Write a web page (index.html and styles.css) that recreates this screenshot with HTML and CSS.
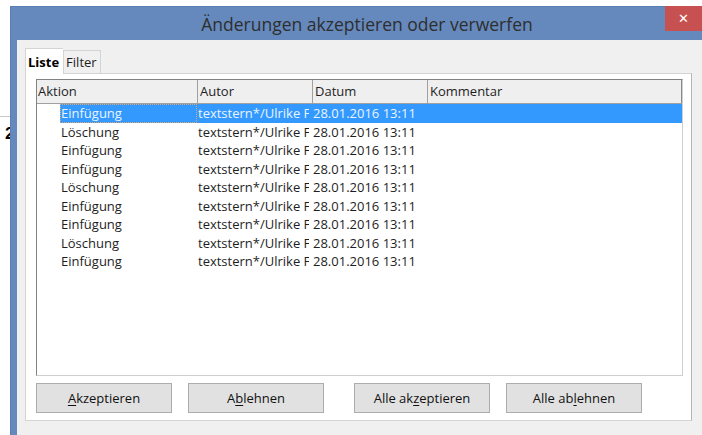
FILE: index.html
```html
<!DOCTYPE html>
<html lang="de">
<head>
<meta charset="utf-8">
<title>Änderungen akzeptieren oder verwerfen</title>
<link rel="stylesheet" href="styles.css">
</head>
<body>
  <div class="desk">
    <div class="doc-rule"></div>
    <span class="doc-num">2</span>
  </div>

  <div class="window">
    <div class="titlebar">
      <span class="title">Änderungen akzeptieren oder verwerfen</span>
      <span class="close">✕</span>
    </div>

    <div class="client">
      <div class="tabs">
        <span class="tab tab-active">Liste</span>
        <span class="tab">Filter</span>
      </div>

      <div class="page">
        <div class="list">
          <div class="head">
            <span class="hcell hc1">Aktion</span>
            <span class="hcell hc2">Autor</span>
            <span class="hcell hc3">Datum</span>
            <span class="hcell hc4">Kommentar</span>
          </div>
          <div class="rows">
            <div class="row row-sel"><span class="cell c-act focus">Einfügung</span><span class="cell c-aut"><span class="clip">textstern*/Ulrike Fuchs</span></span><span class="cell c-date">28.01.2016 13:11</span><span class="cell c-com"></span></div>
            <div class="row"><span class="cell c-act">Löschung</span><span class="cell c-aut"><span class="clip">textstern*/Ulrike Fuchs</span></span><span class="cell c-date">28.01.2016 13:11</span><span class="cell c-com"></span></div>
            <div class="row"><span class="cell c-act">Einfügung</span><span class="cell c-aut"><span class="clip">textstern*/Ulrike Fuchs</span></span><span class="cell c-date">28.01.2016 13:11</span><span class="cell c-com"></span></div>
            <div class="row"><span class="cell c-act">Einfügung</span><span class="cell c-aut"><span class="clip">textstern*/Ulrike Fuchs</span></span><span class="cell c-date">28.01.2016 13:11</span><span class="cell c-com"></span></div>
            <div class="row"><span class="cell c-act">Löschung</span><span class="cell c-aut"><span class="clip">textstern*/Ulrike Fuchs</span></span><span class="cell c-date">28.01.2016 13:11</span><span class="cell c-com"></span></div>
            <div class="row"><span class="cell c-act">Einfügung</span><span class="cell c-aut"><span class="clip">textstern*/Ulrike Fuchs</span></span><span class="cell c-date">28.01.2016 13:11</span><span class="cell c-com"></span></div>
            <div class="row"><span class="cell c-act">Einfügung</span><span class="cell c-aut"><span class="clip">textstern*/Ulrike Fuchs</span></span><span class="cell c-date">28.01.2016 13:11</span><span class="cell c-com"></span></div>
            <div class="row"><span class="cell c-act">Löschung</span><span class="cell c-aut"><span class="clip">textstern*/Ulrike Fuchs</span></span><span class="cell c-date">28.01.2016 13:11</span><span class="cell c-com"></span></div>
            <div class="row"><span class="cell c-act">Einfügung</span><span class="cell c-aut"><span class="clip">textstern*/Ulrike Fuchs</span></span><span class="cell c-date">28.01.2016 13:11</span><span class="cell c-com"></span></div>
          </div>
        </div>

        <div class="buttons">
          <button class="btn"><u>A</u>kzeptieren</button>
          <button class="btn">A<u>b</u>lehnen</button>
          <button class="btn btn-gap">Alle ak<u>z</u>eptieren</button>
          <button class="btn">Alle ab<u>l</u>ehnen</button>
        </div>
      </div>
    </div>
  </div>
</body>
</html>
```

FILE: styles.css
```css
* { box-sizing: border-box; }

html, body {
  margin: 0;
  padding: 0;
}

body {
  width: 702px;
  height: 435px;
  overflow: hidden;
  position: relative;
  background: #ffffff;
  font-family: "Open Sans", "Noto Sans", sans-serif;
  font-size: 13px;
  color: #1e1e1e;
}

/* document visible behind the dialog */
.desk {
  padding-top: 116px;
  width: 12px;
}
.doc-rule {
  height: 1px;
  background: #c8c8c8;
}
.doc-num {
  display: block;
  margin: 7px 0 0 5px;
  font-family: "Liberation Sans", sans-serif;
  font-weight: bold;
  font-size: 17px;
  line-height: 20px;
  color: #000;
}

/* dialog window */
.window {
  position: absolute;
  left: 10px;
  top: 6px;
  width: 714px;
  height: 436px;
  background: #6589bd;
  border: 1px solid #5a7fb5;
  display: flex;
  flex-direction: column;
}

.titlebar {
  position: relative;
  height: 33px;
  flex: none;
  display: flex;
  align-items: center;
  justify-content: center;
}
.title {
  font-family: "Open Sans", "Noto Sans", sans-serif;
  font-size: 17.5px;
  color: #2e2e2e;
  margin-top: 1px;
}
.close {
  position: absolute;
  left: 654px;
  top: -1px;
  width: 37px;
  height: 25px;
  background: #c75050;
  color: #fff;
  font-family: "DejaVu Sans", sans-serif;
  font-size: 13px;
  font-weight: bold;
  display: flex;
  align-items: center;
  justify-content: center;
}

.client {
  flex: 1;
  margin: 0 6px 6px 6px;
  background: #f0f0f0;
  padding: 8px 0 0 8px;
}

/* tab strip */
.tabs {
  display: flex;
  align-items: flex-end;
  height: 25px;
  position: relative;
  z-index: 1;
}
.tab {
  height: 23px;
  padding: 0 3px 0 2px;
  border: 1px solid #d4d4d4;
  border-bottom: none;
  background: #f0f0f0;
  line-height: 22px;
  color: #1e1e1e;
}
.tab-active {
  height: 26px;
  margin-bottom: -1px;
  padding: 0 4px 0 2px;
  background: #ffffff;
  font-weight: bold;
  line-height: 26px;
  color: #000;
  border-right: none;
}
.tab + .tab {
  border-left: 1px solid #d4d4d4;
}

.page {
  width: 667px;
  height: 348px;
  background: #ffffff;
  border: 1px solid #d4d4d4;
  border-right-color: #b5b5b5;
  padding: 5px 0 0 10px;
}

/* change list */
.list {
  width: 647px;
  height: 297px;
  border: 1px solid;
  border-color: #828282 #cfcfcf #cfcfcf #828282;
  background: #ffffff;
}

.head {
  display: flex;
  height: 24px;
  background: #efefef;
  border-bottom: 1px solid #a0a0a0;
}
.hcell {
  padding-left: 2px;
  line-height: 23px;
  border-right: 1px solid #a0a0a0;
  color: #1e1e1e;
}
.hc1 { width: 161px; padding-left: 1px; }
.hc2 { width: 115px; }
.hc3 { width: 115px; }
.hc4 { flex: 1; border-right-color: #8a8a8a; }

.row {
  display: flex;
  height: 18.5px;
  line-height: 18px;
  padding-left: 23px;
  white-space: nowrap;
}
.cell {
  overflow: hidden;
}
.c-act { width: 137px; padding-left: 1px; }
.c-aut { width: 115px; padding-left: 1px; }
.c-aut .clip {
  display: block;
  width: 111px;
  overflow: hidden;
}
.c-date { width: 115px; padding-left: 1px; }
.c-com { flex: 1; }

.row-sel .cell {
  background: #3399ff;
  color: #eaf4ff;
}
.focus {
  outline: 1px dotted #e3a66a;
  outline-offset: -1px;
}

/* action buttons */
.buttons {
  display: flex;
  margin-top: 7px;
}
.btn {
  width: 136px;
  height: 30px;
  margin-right: 16px;
  background: #e1e1e1;
  border: 1px solid #adadad;
  border-radius: 0;
  font-family: inherit;
  font-size: 13px;
  color: #111;
  padding: 0;
}
.btn-gap {
  margin-left: 14px;
}
.btn u {
  text-underline-offset: 2px;
}
```
